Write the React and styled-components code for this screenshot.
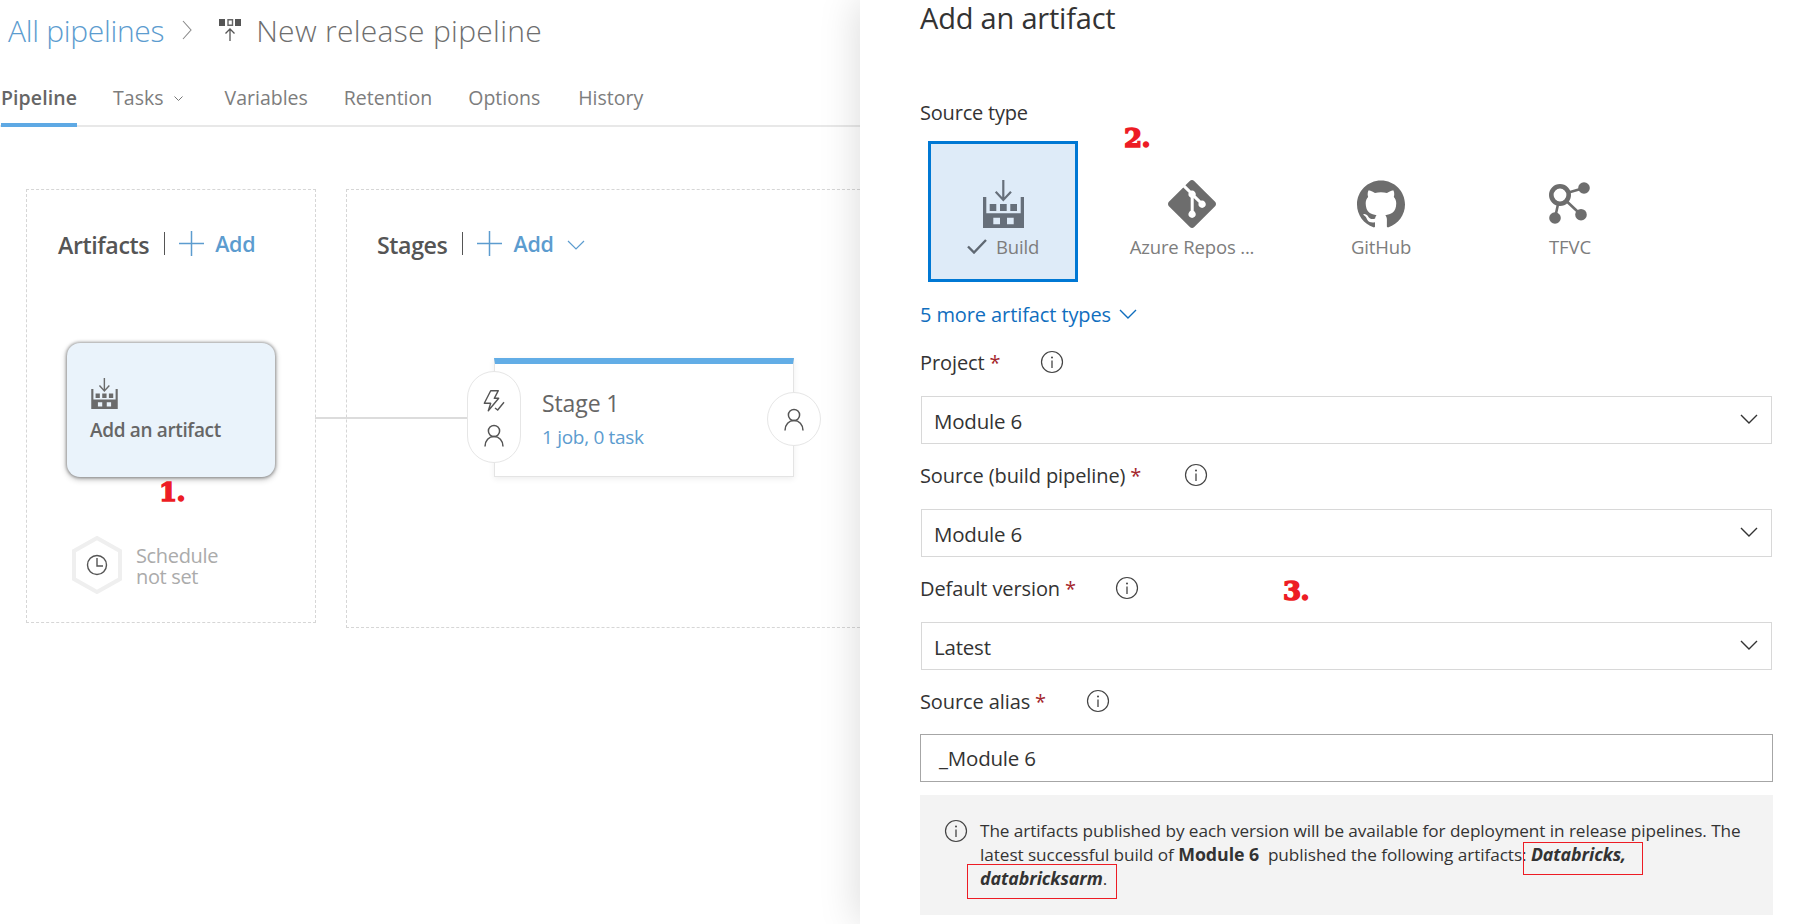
import React from 'react';
import styled, { createGlobalStyle } from 'styled-components';
import { SiGit, SiGithub } from 'react-icons/si';

const Global = createGlobalStyle`
  html, body { margin: 0; padding: 0; background: #fff; }
  body { font-family: "Open Sans", "Noto Sans", "Liberation Sans", sans-serif; }
`;

const Page = styled.div`
  width: 1800px; height: 924px; display: flex; overflow: hidden; background: #fff; color: #333;
`;
const Left = styled.div`
  width: 860px; flex: none; display: flex; flex-direction: column;
`;
const TitleRow = styled.div`
  height: 60px; display: flex; align-items: center; padding-left: 8px; font-size: 30px; font-weight: 300;
`;
const Crumb = styled.span`
  color: #5c9ccf; letter-spacing: -0.3px;
`;
const TitleText = styled.span`
  color: #6e6e6e; margin-left: 15px; letter-spacing: 0.3px;
`;
const CrumbSep = styled.svg`
  width: 10px; height: 20px; margin: 0 27px 0 18px;
`;
const Tabs = styled.div`
  height: 67px; display: flex; align-items: flex-end; border-bottom: 2px solid #e8e8e8; box-sizing: border-box; padding-left: 1px;
`;
const Tab = styled.div`
  display: flex; align-items: center; padding-top: 14px; box-sizing: border-box; margin-right: ${p => p.$mr}px;
  font-size: 19.5px; color: ${p => (p.$active ? '#666' : '#7d7d7d')}; font-weight: ${p => (p.$active ? 600 : 400)};
  letter-spacing: ${p => (p.$active ? '0.1px' : '0')}; position: relative;
  border-bottom: ${p => (p.$active ? '4px solid #5ea9e4' : '4px solid transparent')};
  margin-bottom: -2px; height: 69px;
`;
const TabCaret = styled.svg`
  width: 9px; height: 6px; margin-left: 10px; margin-top: 3px;
`;
const Canvas = styled.div`
  flex: 1; position: relative; display: flex; align-items: flex-start; padding: 62px 0 0 26px; min-height: 0;
`;
const ArtifactsBox = styled.div`
  width: 290px; height: 434px; box-sizing: border-box; border: 1px dashed #d6d6d6; padding: 35px 0 0 31px; flex: none;
`;
const StagesBox = styled.div`
  flex: 1; height: 439px; box-sizing: border-box; border: 1px dashed #d6d6d6; border-right: 0; margin-left: 30px; padding: 35px 0 0 30px;
`;
const BoxHead = styled.div`
  height: 40px; display: flex; align-items: center;
`;
const BoxTitle = styled.span`
  font-size: 23.2px; font-weight: 600; color: #555; letter-spacing: -0.4px; margin-right: 15px;
`;
const HeadSep = styled.span`
  width: 1px; height: 23px; background: #555; margin-top: -4px;
`;
const PlusIcon = styled.svg`
  width: 25px; height: 25px; margin: -4px 11px 0 14px; flex: none;
`;
const AddLink = styled.span`
  font-size: 21.5px; font-weight: 600; color: #5c9ccf; letter-spacing: -0.3px; margin-top: -3px;
`;
const AddCaret = styled.svg`
  width: 18px; height: 10px; margin: 0 0 0 13px;
`;
const ArtifactCard = styled.div`
  width: 208px; height: 134px; margin: 78px 0 0 9px; box-sizing: border-box; border-radius: 13px; background: #eaf3fb;
  box-shadow: 0 0 3px 1px rgba(0,0,0,.3), 0 2px 6px rgba(0,0,0,.3); padding: 35px 0 0 23px; position: relative;
  color: #666; font-size: 19px; font-weight: 600; letter-spacing: -0.35px;
`;
const Schedule = styled.div`
  display: flex; align-items: center; margin: 59px 0 0 13px;
`;
const ScheduleText = styled.div`
  font-size: 20px; line-height: 21px; color: #ababab; letter-spacing: -0.35px; margin: 2px 0 0 13px;
`;
const Hex = styled.svg`
  width: 52px; height: 58px; flex: none;
`;
const Connector = styled.div`
  position: absolute; left: 315px; top: 290px; width: 152px; height: 2px; background: #dcdcdc;
`;
const StageCard = styled.div`
  width: 300px; height: 119px; margin: 93px 0 0 117px; box-sizing: border-box; background: #fff; border: 1px solid #e4e4e4; border-top: 6px solid #62ade6;
  box-shadow: 0 2px 6px rgba(0,0,0,.07); padding: 23px 0 0 47px; position: relative;
`;
const StageName = styled.div`
  font-size: 23px; line-height: 33px; color: #666; letter-spacing: -0.1px;
`;
const StageMeta = styled.div`
  font-size: 19px; line-height: 34px; color: #5c9ccf; letter-spacing: -0.3px;
`;
const Pill = styled.div`
  position: absolute; background: #fff; border: 1px solid #e6e6e6; border-radius: 27px; box-sizing: border-box;
  display: flex; flex-direction: column; align-items: center; justify-content: center; gap: 10px;
  padding-top: ${p => p.$pt || 0}px;
  left: ${p => p.$left}px; top: ${p => p.$top}px; width: ${p => p.$w}px; height: ${p => p.$h}px;
`;
const PillIcon = styled.svg`
  width: 24px; height: 24px;
`;

const Panel = styled.div`
  flex: 1; position: relative; z-index: 2; background: #fff; box-shadow: -4px 0 36px rgba(0,0,0,.13); padding-left: 60px; padding-right: 27px;
`;
const PanelTitle = styled.div`
  height: 36px; line-height: 36px; font-size: 29px; color: #333; font-weight: 400; letter-spacing: -0.2px; margin-bottom: 62px;
`;
const SectionLabel = styled.div`
  height: 30px; line-height: 30px; font-size: 20px; color: #333; letter-spacing: -0.2px; margin-bottom: 13px;
`;
const TileRow = styled.div`
  display: flex; gap: 39px; margin-left: 8px; position: relative;
`;
const Tile = styled.div`
  width: 150px; height: 141px; box-sizing: border-box; border: 3px solid ${p => (p.$selected ? '#0078d4' : 'transparent')};
  background: ${p => (p.$selected ? '#deebf8' : 'transparent')};
  display: flex; flex-direction: column; align-items: center; padding-top: 36px; color: #7d7d7d;
`;
const TileLabel = styled.div`
  display: flex; align-items: center; gap: 9px; height: 30px; margin-top: 3px; font-size: 18.5px; letter-spacing: -0.15px; white-space: nowrap;
`;
const BuildSvg = styled.svg`
  width: 41px; height: 48px; display: block; flex: none;
`;
const IconSlot = styled.div`
  width: 48px; height: 48px; display: flex; align-items: center; justify-content: center; color: #6d6d6d; font-size: 48px; flex: none;
`;
const More = styled.div`
  height: 30px; margin-top: 17px; margin-bottom: 18px; display: flex; align-items: center; gap: 8px; font-size: 20px; color: #106ebe; letter-spacing: -0.1px;
`;
const MoreCaret = styled.svg`
  width: 18px; height: 10px;
`;
const Fields = styled.div`
  display: flex; flex-direction: column; gap: 16px;
`;
const Field = styled.div`
  display: flex; flex-direction: column; position: relative;
`;
const LabelRow = styled.div`
  height: 32px; box-sizing: border-box; padding-bottom: 2px; margin-bottom: 17px; display: flex; align-items: center; font-size: 20px; color: #333; letter-spacing: -0.1px;
`;
const Req = styled.span`
  color: #a4262c; margin-left: 5px;
`;
const InfoSvg = styled.svg`
  width: 24px; height: 24px; margin-left: ${p => p.$ml || 0}px; flex: none;
`;
const Select = styled.div`
  height: 48px; width: 851px; box-sizing: border-box; border: 1px solid #d8d8d8; margin-left: 1px; display: flex; align-items: center; justify-content: space-between;
  padding: 1px 13px 0 12px; font-size: 20.5px; color: #333; letter-spacing: -0.2px;
`;
const TextInput = styled.div`
  height: 48px; margin-top: -1px; box-sizing: border-box; border: 1px solid #a6a6a6; display: flex; align-items: center; padding-left: 18px; font-size: 20.5px; color: #333; letter-spacing: -0.2px;
`;
const SelectCaret = styled.svg`
  width: 18px; height: 10px; margin-top: -3px;
`;
const InfoBox = styled.div`
  margin-top: 13px; height: 120px; box-sizing: border-box; background: #f3f3f3; display: flex; padding: 24px 30px 0 24px; position: relative;
`;
const InfoText = styled.div`
  margin-left: 12px; font-size: 17.2px; line-height: 24px; color: #333; letter-spacing: -0.07px;
`;
const Strong = styled.b`
  font-weight: 700; font-size: 17.8px; line-height: 1;
`;
const StrongItalic = styled.b`
  font-weight: 700; font-style: italic; font-size: 17.8px; line-height: 1;
`;
const RedBox = styled.div`
  position: absolute; border: 1px solid #ed1c24; box-sizing: border-box;
  left: ${p => p.$l}px; top: ${p => p.$t}px; width: ${p => p.$w}px; height: ${p => p.$h}px;
`;
const Note = styled.span`
  position: absolute; left: ${p => p.$l}px; top: ${p => p.$t}px; color: #ed1c24; font-family: "DejaVu Serif", serif; font-weight: 700;
  font-size: 26px; line-height: 28px; -webkit-text-stroke: 1.5px #ed1c24; letter-spacing: -0.5px;
`;

const BuildIcon = ({ as: C = BuildSvg, color = '#666f7a' }) => (
  <C viewBox="0 0 41 48">
    <path d="M20.3 0v20M12.7 11.7l7.6 8.3 7.7-8.3" fill="none" stroke={color} strokeWidth="2.2" />
    <path fill={color} d="M6.7 24h6.6v7H6.7zM17 24h6.7v7H17zM27.3 24H34v7h-6.7z" />
    <path fill={color} fillRule="evenodd" d="M0 17h3.3v16.3h34.4V17H41v31H0zM10.3 37.7V44.3H17V37.7zM24 37.7V44.3h6.7V37.7z" />
  </C>
);
const Check = () => (
  <svg width="20" height="16" viewBox="0 0 20 16"><path d="M1 8.5l6 6L19 2" fill="none" stroke="#5f6872" strokeWidth="2.4" /></svg>
);
const Info = ({ ml }) => (
  <InfoSvg viewBox="0 0 24 24" $ml={ml}>
    <circle cx="12" cy="12" r="10.5" fill="none" stroke="#444" strokeWidth="1.2" />
    <path d="M12 10.5V18" stroke="#444" strokeWidth="1.3" />
    <circle cx="12" cy="7.4" r="1" fill="#444" />
  </InfoSvg>
);
const Chevron = ({ as: C = SelectCaret, color = '#333', width = 1.4 }) => (
  <C viewBox="0 0 18 10"><path d="M1 1l8 8 8-8" fill="none" stroke={color} strokeWidth={width} /></C>
);
const Person = () => (
  <PillIcon viewBox="0 0 24 24">
    <circle cx="12" cy="8" r="5.6" fill="none" stroke="#555" strokeWidth="1.5" />
    <path d="M3 23.5c0-6 4-9.9 9-9.9s9 3.9 9 9.9" fill="none" stroke="#555" strokeWidth="1.5" />
  </PillIcon>
);
const Bolt = () => (
  <PillIcon viewBox="0 0 24 24">
    <path d="M8.7 1.7h7.6l-4 7.6h4.4L6.3 21.7l2.4-7.4H2.3z" fill="none" stroke="#555" strokeWidth="1.4" strokeLinejoin="round" />
    <path d="M13 19l2.7 2L22 13.3" fill="none" stroke="#555" strokeWidth="1.4" />
  </PillIcon>
);
const Tfvc = () => (
  <svg width="48" height="48" viewBox="16 11 48 48">
    <path d="M30 26L54 19M30 26L51 45.7M30 26L25 49" stroke="#6d6d6d" strokeWidth="2.6" />
    <circle cx="30" cy="26" r="8.7" fill="#fff" stroke="#6d6d6d" strokeWidth="4.6" />
    <circle cx="54" cy="19" r="5.8" fill="#6d6d6d" />
    <circle cx="51" cy="45.7" r="5.8" fill="#6d6d6d" />
    <circle cx="25" cy="49" r="5.8" fill="#6d6d6d" />
  </svg>
);
const CardBuild = styled(BuildSvg)`
  width: 27px; height: 31px; margin: 0 0 8px 1px;
`;
const Plus = () => (
  <PlusIcon viewBox="0 0 25 25"><path d="M12.5 0v25M0 12.5h25" stroke="#5c9ccf" strokeWidth="1.5" /></PlusIcon>
);

const fields = [
  { label: 'Project', ml: 40, value: 'Module 6' },
  { label: 'Source (build pipeline)', ml: 43, value: 'Module 6' },
  { label: 'Default version', ml: 39, value: 'Latest' },
];

export default function App() {
  return (
    <Page>
      <Global />
      <Left>
        <TitleRow>
          <Crumb>All pipelines</Crumb>
          <CrumbSep viewBox="0 0 10 20"><path d="M1 1l8 9-8 9" fill="none" stroke="#8a8a8a" strokeWidth="1.1" /></CrumbSep>
          <svg width="22" height="22" viewBox="0 0 22 22">
            <path fill="#555" d="M0 0h6v7H0z" />
            <path fill="none" stroke="#666" strokeWidth="1.4" d="M9 .8h4.5v5.5H9z" />
            <path fill="#555" d="M16 0h6v7h-6z" />
            <path d="M11 22V10M6.5 14.5L11 10l4.5 4.5" fill="none" stroke="#555" strokeWidth="1.3" />
          </svg>
          <TitleText>New release pipeline</TitleText>
        </TitleRow>
        <Tabs>
          <Tab $active $mr={36}>Pipeline</Tab>
          <Tab $mr={42}>Tasks
            <TabCaret viewBox="0 0 9 6"><path d="M.5.5l4 4 4-4" fill="none" stroke="#777" strokeWidth="1" /></TabCaret>
          </Tab>
          <Tab $mr={36}>Variables</Tab>
          <Tab $mr={36}>Retention</Tab>
          <Tab $mr={38}>Options</Tab>
          <Tab $mr={0}>History</Tab>
        </Tabs>
        <Canvas>
          <ArtifactsBox>
            <BoxHead>
              <BoxTitle>Artifacts</BoxTitle>
              <HeadSep />
              <Plus />
              <AddLink>Add</AddLink>
            </BoxHead>
            <ArtifactCard>
              <BuildIcon as={CardBuild} color="#6b6b6b" />
              Add an artifact
              <Note $l={92} $t={135}>1.</Note>
            </ArtifactCard>
            <Schedule>
              <Hex viewBox="0 0 52 58">
                <path d="M26 2L49 15v28L26 56 3 43V15z" fill="#fff" stroke="#efefef" strokeWidth="4" />
                <circle cx="26" cy="29" r="9.5" fill="none" stroke="#555" strokeWidth="1.4" />
                <path d="M26 22v8h6" fill="none" stroke="#555" strokeWidth="1.4" />
              </Hex>
              <ScheduleText>Schedule<br />not set</ScheduleText>
            </Schedule>
          </ArtifactsBox>
          <Connector />
          <StagesBox>
            <BoxHead>
              <BoxTitle>Stages</BoxTitle>
              <HeadSep />
              <Plus />
              <AddLink>Add</AddLink>
              <Chevron as={AddCaret} color="#5c9ccf" width={1.2} />
            </BoxHead>
            <StageCard>
              <StageName>Stage 1</StageName>
              <StageMeta>1 job, 0 task</StageMeta>
              <Pill $left={-28} $top={7} $w={54} $h={92} $pt={2}><Bolt /><Person /></Pill>
              <Pill $left={272} $top={28} $w={54} $h={54}><Person /></Pill>
            </StageCard>
          </StagesBox>
        </Canvas>
      </Left>
      <Panel>
        <PanelTitle>Add an artifact</PanelTitle>
        <SectionLabel>Source type</SectionLabel>
        <TileRow>
          <Tile $selected>
            <BuildIcon />
            <TileLabel><Check />Build</TileLabel>
          </Tile>
          <Tile>
            <IconSlot><SiGit /></IconSlot>
            <TileLabel>Azure Repos ...</TileLabel>
          </Tile>
          <Tile>
            <IconSlot><SiGithub /></IconSlot>
            <TileLabel>GitHub</TileLabel>
          </Tile>
          <Tile>
            <IconSlot><Tfvc /></IconSlot>
            <TileLabel>TFVC</TileLabel>
          </Tile>
          <Note $l={196} $t={-17}>2.</Note>
        </TileRow>
        <More>5 more artifact types<Chevron as={MoreCaret} color="#106ebe" /></More>
        <Fields>
          {fields.map((f, i) => (
            <Field key={f.label}>
              <LabelRow>{f.label}<Req>*</Req><Info ml={f.ml} /></LabelRow>
              <Select>{f.value}<Chevron /></Select>
              {i === 2 && <Note $l={363} $t={4}>3.</Note>}
            </Field>
          ))}
          <Field>
            <LabelRow>Source alias<Req>*</Req><Info ml={40} /></LabelRow>
            <TextInput>_Module 6</TextInput>
          </Field>
        </Fields>
        <InfoBox>
          <Info ml={0} />
          <InfoText>
            The artifacts published by each version will be available for deployment in release pipelines. The latest successful build of <Strong>Module 6</Strong>&nbsp; published the following artifacts: <StrongItalic>Databricks, databricksarm</StrongItalic>.
          </InfoText>
          <RedBox $l={603} $t={47} $w={120} $h={33} />
          <RedBox $l={47} $t={69} $w={150} $h={35} />
        </InfoBox>
      </Panel>
    </Page>
  );
}
